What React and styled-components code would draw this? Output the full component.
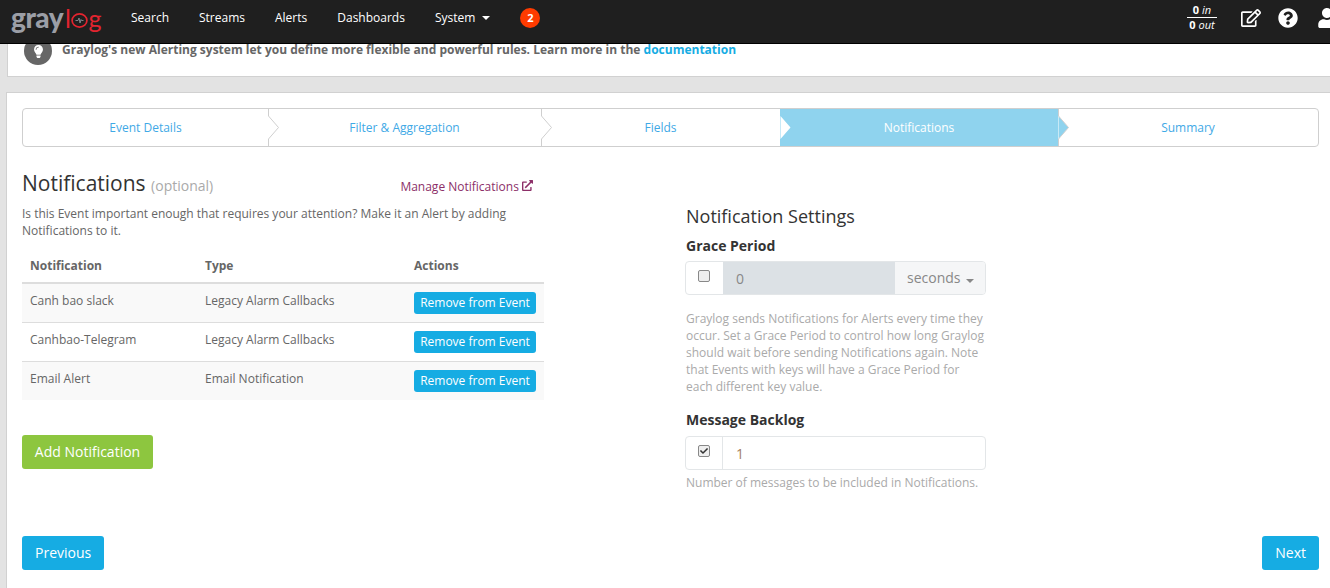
import React from 'react'
import styled, { createGlobalStyle } from 'styled-components'
import { FaExternalLinkAlt, FaRegEdit, FaQuestionCircle, FaUser, FaLightbulb, FaCheck } from 'react-icons/fa'

const GlobalStyle = createGlobalStyle`
    html, body {
        margin: 0;
        height: 100%;
        overflow: hidden;
        background: #e3e3e3;
        font-family: "Open Sans", sans-serif;
        font-size: 12px;
        color: #666;
    }
    * { box-sizing: border-box; }
`

const steps = [
    { label: 'Event Details' },
    { label: 'Filter & Aggregation' },
    { label: 'Fields', beforeActive: true },
    { label: 'Notifications', active: true },
    { label: 'Summary' },
]

const rows = [
    { name: 'Canh bao slack', type: 'Legacy Alarm Callbacks' },
    { name: 'Canhbao-Telegram', type: 'Legacy Alarm Callbacks' },
    { name: 'Email Alert', type: 'Email Notification' },
]

function Chevron({ fill, stroke }) {
    return (
        <ChevronSvg width="12" height="37" viewBox="0 0 12 37">
            <path d="M0.5 0 V7 L10.5 18.5 L0.5 30 V37" fill={fill} stroke={stroke} />
        </ChevronSvg>
    )
}

function App() {
    return (
        <>
            <GlobalStyle />
            <Nav>
                <Logo>
                    <span>gray</span>
                    <LogoRed>l</LogoRed>
                    <LogoO width="17" height="15" viewBox="0 0 17 15">
                        <ellipse cx="8.5" cy="7.5" rx="7.4" ry="6.6" fill="none" stroke="#e3242f" strokeWidth="1.7" />
                        <path d="M4.5 7.5 H7 L8 5 L9 10 L10 6.5 L10.6 7.5 H12.5" fill="none" stroke="#8a8d94" strokeWidth="0.9" />
                    </LogoO>
                    <LogoRed>g</LogoRed>
                </Logo>
                <NavLinks>
                    <NavLink>Search</NavLink>
                    <NavLink>Streams</NavLink>
                    <NavLink>Alerts</NavLink>
                    <NavLink>Dashboards</NavLink>
                    <NavLink>System <Caret /></NavLink>
                </NavLinks>
                <Badge>2</Badge>
                <NavRight>
                    <Throughput>
                        <div><b>0</b> <i>in</i></div>
                        <div><b>0</b> <i>out</i></div>
                    </Throughput>
                    <EditIcon><FaRegEdit size={20} /></EditIcon>
                    <FaQuestionCircle size={20} />
                    <UserIcon><FaUser size={20} /></UserIcon>
                </NavRight>
            </Nav>

            <AlertPanel>
                <AlertRow>
                    <BulbCircle><FaLightbulb size={13} /></BulbCircle>
                    <AlertText>Graylog's new Alerting system let you define more flexible and powerful rules. Learn more in the <AlertLink>documentation</AlertLink></AlertText>
                </AlertRow>
            </AlertPanel>

            <MainPanel>
                <Steps>
                    {steps.map((step, i) => (
                        <Step key={step.label} $active={step.active}>
                            {step.label}
                            {i < steps.length - 1 && (
                                <Chevron
                                    fill={step.active ? '#8fd3ee' : '#fff'}
                                    stroke={step.beforeActive ? 'none' : '#cfcfcf'}
                                />
                            )}
                        </Step>
                    ))}
                </Steps>

                <Columns>
                    <LeftColumn>
                        <TitleRow>
                            <Title>Notifications <Optional>(optional)</Optional></Title>
                            <ManageLink>Manage Notifications <FaExternalLinkAlt size={11} /></ManageLink>
                        </TitleRow>
                        <Intro>Is this Event important enough that requires your attention? Make it an Alert by adding Notifications to it.</Intro>
                        <Table>
                            <thead>
                                <tr>
                                    <Th $w={175}>Notification</Th>
                                    <Th $w={209}>Type</Th>
                                    <Th>Actions</Th>
                                </tr>
                            </thead>
                            <tbody>
                                {rows.map(row => (
                                    <Row key={row.name}>
                                        <Td>{row.name}</Td>
                                        <Td>{row.type}</Td>
                                        <ActionTd><SmallButton>Remove from Event</SmallButton></ActionTd>
                                    </Row>
                                ))}
                            </tbody>
                        </Table>
                        <AddButton>Add Notification</AddButton>
                    </LeftColumn>

                    <RightColumn>
                        <SettingsTitle>Notification Settings</SettingsTitle>
                        <Label>Grace Period</Label>
                        <InputGroup>
                            <CheckAddon $flat><Checkbox /></CheckAddon>
                            <DisabledInput>0</DisabledInput>
                            <UnitAddon>seconds <Caret $dark /></UnitAddon>
                        </InputGroup>
                        <Help>Graylog sends Notifications for Alerts every time they occur. Set a Grace Period to control how long Graylog should wait before sending Notifications again. Note that Events with keys will have a Grace Period for each different key value.</Help>
                        <BacklogLabel>Message Backlog</BacklogLabel>
                        <InputGroup>
                            <CheckAddon><Checkbox><FaCheck size={8} /></Checkbox></CheckAddon>
                            <ValueInput>1</ValueInput>
                        </InputGroup>
                        <BacklogHelp>Number of messages to be included in Notifications.</BacklogHelp>
                    </RightColumn>
                </Columns>

                <Footer>
                    <NavButton>Previous</NavButton>
                    <NavButton>Next</NavButton>
                </Footer>
            </MainPanel>
        </>
    )
}

export default App

const Nav = styled.div`
    position: relative;
    z-index: 2;
    height: 44px;
    background: #1f1f1f;
    border-bottom: 1px solid #000;
    display: flex;
    align-items: center;
    padding: 0 0 8px 11px;
    color: #fff;
`
const Logo = styled.div`
    width: 105px;
    display: flex;
    align-items: baseline;
    font-family: "Lato", sans-serif;
    font-weight: 900;
    font-size: 28px;
    line-height: 36px;
    letter-spacing: -0.5px;
    color: #9b9ea6;
`
const LogoRed = styled.span`
    color: #e3242f;
    font-size: 25px;
    font-weight: 400;
    margin-left: 2px;
`
const LogoO = styled.svg`
    margin-left: 1px;
    margin-right: -2px;
`
const NavLinks = styled.div`
    display: flex;
    gap: 30px;
    margin-left: 15px;
`
const NavLink = styled.div`
    font-size: 12px;
    color: #fff;
    display: flex;
    align-items: center;
    gap: 5px;
`
const Caret = styled.span`
    display: inline-block;
    margin-left: 2px;
    border-top: 4px solid ${props => props.$dark ? '#888' : '#fff'};
    border-left: 4px solid transparent;
    border-right: 4px solid transparent;
`
const Badge = styled.div`
    width: 20px;
    height: 20px;
    margin-left: 30px;
    border-radius: 50%;
    background: #ff3b00;
    color: #fff;
    font-weight: 700;
    font-size: 11px;
    line-height: 20px;
    text-align: center;
`
const NavRight = styled.div`
    margin-left: auto;
    display: flex;
    align-items: center;
    gap: 19px;
    margin-right: -7px;
`
const Throughput = styled.div`
    width: 30px;
    font-size: 11px;
    line-height: 14px;
    text-align: center;
    margin-right: 3px;
    div:first-child {
        border-bottom: 1px solid #fff;
    }
`
const EditIcon = styled.span`
    display: flex;
    margin: 0 -2px 0 2px;
`
const UserIcon = styled.span`
    display: flex;
    color: #fff;
`
const AlertPanel = styled.div`
    display: flow-root;
    height: 33px;
    margin-left: 7px;
    background: #fff;
    border-left: 1px solid #d1d1d1;
    border-bottom: 1px solid #d1d1d1;
`
const AlertRow = styled.div`
    display: flex;
    align-items: center;
    gap: 10px;
    margin-top: -7px;
    padding-left: 16px;
    font-weight: 700;
    font-size: 12px;
`
const AlertText = styled.span`
    line-height: 10px;
    margin-bottom: 3px;
`
const BulbCircle = styled.div`
    width: 28px;
    height: 28px;
    border-radius: 50%;
    background: #666;
    color: #fff;
    display: flex;
    align-items: center;
    justify-content: center;
`
const AlertLink = styled.span`
    color: #16ace3;
`
const MainPanel = styled.div`
    height: 520px;
    margin: 15px 0 0 6px;
    padding: 15px 11px 0 15px;
    background: #fff;
    border-left: 1px solid #d1d1d1;
    border-top: 1px solid #d1d1d1;
`
const Steps = styled.div`
    display: grid;
    grid-template-columns: 245px 273px 239px 278px 1fr;
    height: 39px;
    border: 1px solid #cfcfcf;
    border-radius: 4px;
`
const Step = styled.div`
    position: relative;
    display: flex;
    align-items: center;
    justify-content: center;
    color: ${props => props.$active ? '#fff' : '#3fa9e6'};
    background: ${props => props.$active ? '#8fd3ee' : 'transparent'};
    font-size: 12px;
`
const ChevronSvg = styled.svg`
    position: absolute;
    top: 0;
    left: 100%;
    z-index: 1;
`
const Columns = styled.div`
    display: flex;
    gap: 142px;
`
const LeftColumn = styled.div`
    width: 522px;
    height: 387px;
`
const TitleRow = styled.div`
    display: flex;
    justify-content: space-between;
    align-items: baseline;
    padding: 22px 11px 0 0;
`
const Title = styled.div`
    font-size: 21px;
    line-height: 28px;
    color: #333;
`
const Optional = styled.span`
    font-size: 14px;
    color: #aaa;
`
const ManageLink = styled.div`
    font-size: 12px;
    color: #8c2f68;
`
const Intro = styled.p`
    margin: 5px 0 0;
    line-height: 17px;
    width: 510px;
`
const Table = styled.table`
    width: 100%;
    margin-top: 9px;
    border-collapse: collapse;
    table-layout: fixed;
`
const Th = styled.th`
    width: ${props => props.$w ? `${props.$w}px` : 'auto'};
    height: 35px;
    padding: 0 8px;
    text-align: left;
    font-size: 12px;
    font-weight: 700;
    border-bottom: 2px solid #ddd;
`
const Row = styled.tr`
    height: 39px;
    border-top: 1px solid #ddd;
    &:nth-child(odd) {
        background: #f9f9f9;
    }
`
const Td = styled.td`
    padding: 0 8px 4px;
    font-size: 12px;
`
const ActionTd = styled.td`
    padding: 0 8px;
`
const SmallButton = styled.button`
    display: block;
    height: 22px;
    width: 122px;
    padding: 0;
    border: 0;
    border-radius: 3px;
    background: #16ace3;
    color: #fff;
    font: 12px "Open Sans", sans-serif;
`
const AddButton = styled.button`
    display: block;
    margin-top: 35px;
    width: 131px;
    height: 34px;
    padding: 0 0 2px;
    border: 0;
    border-radius: 3px;
    background: #8dc63f;
    color: #fff;
    font: 14px "Open Sans", sans-serif;
`
const RightColumn = styled.div`
    width: 300px;
    padding-top: 57px;
`
const SettingsTitle = styled.div`
    font-size: 18px;
    line-height: 24px;
    color: #333;
`
const Label = styled.div`
    margin-top: 8px;
    font-size: 14px;
    font-weight: 700;
    line-height: 20px;
    color: #333;
`
const InputGroup = styled.div`
    margin: 5px 0 0 -1px;
    height: 34px;
    display: flex;
    border: 1px solid #e3e6e8;
    border-radius: 4px;
    overflow: hidden;
`
const CheckAddon = styled.div`
    width: 37px;
    display: flex;
    justify-content: center;
    padding: 8px 1px 0 0;
    border-right: ${props => props.$flat ? '0' : '1px solid #e3e6e8'};
`
const Checkbox = styled.div`
    width: 12px;
    height: 12px;
    border: 1px solid #888;
    border-radius: 2px;
    background: #eee;
    display: flex;
    align-items: center;
    justify-content: center;
    color: #333;
`
const DisabledInput = styled.div`
    width: 172px;
    padding-left: 13px;
    background: #dce1e5;
    font-size: 14px;
    line-height: 34px;
    color: #888;
`
const UnitAddon = styled.div`
    flex: 1;
    padding-left: 12px;
    background: #f5f6f7;
    font-size: 14px;
    line-height: 32px;
    color: #888;
`
const ValueInput = styled.div`
    flex: 1;
    padding-left: 13px;
    font-size: 14px;
    line-height: 34px;
    color: #a5805f;
`
const Help = styled.p`
    margin: 15px 0 0;
    line-height: 17px;
    color: #aaa;
`
const BacklogLabel = styled(Label)`
    margin-top: 15px;
    padding-bottom: 1px;
`
const BacklogHelp = styled(Help)`
    margin-top: 4px;
`
const Footer = styled.div`
    display: flex;
    justify-content: space-between;
    margin-top: 2px;
`
const NavButton = styled.button`
    height: 34px;
    padding: 0 13px 2px;
    border: 0;
    border-radius: 3px;
    background: #16ace3;
    color: #fff;
    font: 14px "Open Sans", sans-serif;
`
